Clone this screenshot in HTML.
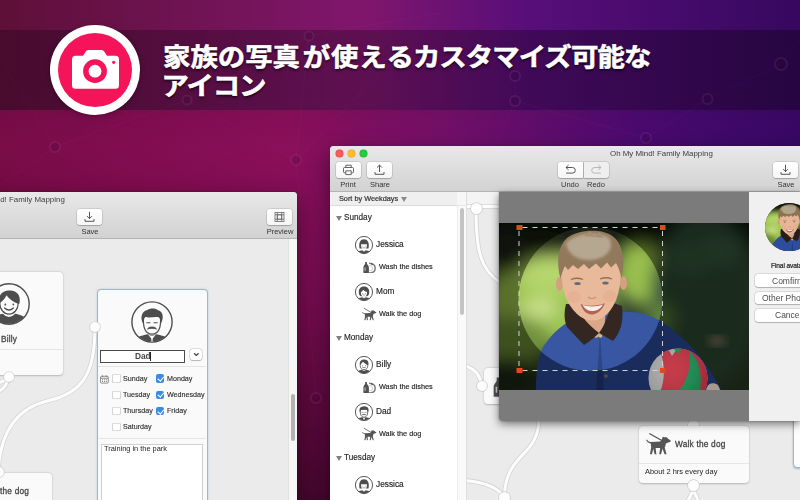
<!DOCTYPE html>
<html lang="ja">
<head>
<meta charset="utf-8">
<title>Oh My Mind! Family Mapping</title>
<style>
*{box-sizing:border-box;margin:0;padding:0}
html,body{width:800px;height:500px;overflow:hidden}
body{position:relative;font-family:"Liberation Sans","Noto Sans CJK JP",sans-serif;color:#333;background:#5a0d45}
.abs{position:absolute}
#bg{left:0;top:0;width:800px;height:500px;
 background:
  linear-gradient(to bottom, rgba(0,0,0,0) 0px, rgba(0,0,0,0) 120px, rgba(20,0,10,.18) 300px, rgba(20,0,10,.58) 500px),
  linear-gradient(to right,#7c0c4a 0%,#8e0f5c 36%,#76106c 56%,#4c0a74 80%,#380868 100%);}
#bgtop{left:0;top:0;width:800px;height:110px;
 background:linear-gradient(to right,#5e1038 0%,#80166c 45%,#580e7a 66%,#36085e 100%)}
#band{left:0;top:30px;width:800px;height:80px;background:linear-gradient(to right,rgba(20,0,20,.3),rgba(20,0,20,.3) 50%,rgba(14,0,24,.4))}
#fade{left:0;top:110px;width:800px;height:40px;background:linear-gradient(to bottom,rgba(40,0,30,.1),rgba(40,0,30,0))}
#camc{left:50px;top:25px;width:90px;height:90px;border-radius:50%;background:#fff;box-shadow:0 1px 5px rgba(0,0,0,.35)}
#camc i{position:absolute;left:8px;top:8px;width:74px;height:74px;border-radius:50%;background:#f5135a}
#h1{left:163px;top:42.500px;transform:scaleY(.93);transform-origin:0 0;font-size:27.4px;line-height:31.100px;font-weight:700;color:#fff;white-space:nowrap;text-shadow:0 2px 3px rgba(0,0,0,.6),0 1px 1px rgba(0,0,0,.35);-webkit-text-stroke:.6px #fff}
#h1 .g2{letter-spacing:.8px;margin-left:2.800px}
#h1 .g3{letter-spacing:-.94px;margin-left:-1.800px}
#h1 .g4{letter-spacing:-.9px;margin-left:.1px}
#h1 .k2{letter-spacing:-1.100px;margin-left:-1.500px}
.win{background:#ebebeb;box-shadow:0 8px 22px rgba(0,0,0,.45),0 0 1px rgba(0,0,0,.5);overflow:hidden}
.tb{left:0;top:0;width:100%;background:linear-gradient(#e9e9e9,#d2d2d2);border-bottom:1px solid #b4b4b4}
.btn{position:absolute;width:25px;height:16px;border-radius:3px;background:linear-gradient(#fff,#f6f6f6);box-shadow:0 0 0 .5px rgba(0,0,0,.18),0 1px 1px rgba(0,0,0,.18)}
.lbl{will-change:transform;position:absolute;font-size:7.5px;color:#333;white-space:nowrap;transform:translateX(-50%);line-height:9px}
.card{background:#fafafa;border-radius:4px;box-shadow:0 .5px 2px rgba(0,0,0,.22),0 0 0 .5px rgba(0,0,0,.04)}
.node{width:10px;height:10px;border-radius:50%;background:#fdfdfd;box-shadow:0 0 0 .8px #cfcfcf,0 .5px 1px rgba(0,0,0,.15)}
.cb{position:absolute;width:8.500px;height:8.500px;border-radius:2px;background:#fff;box-shadow:inset 0 0 0 .6px #b9b9b9}
.cb.on{background:#3b8be6;box-shadow:none}
.cb.on:after{content:"";position:absolute;left:3px;top:.9px;width:2.500px;height:4.700px;border:solid #fff;border-width:0 1.200px 1.200px 0;transform:rotate(40deg)}
.dl{font-size:7.150px;color:#2a2a2a;-webkit-text-stroke:.12px #2a2a2a}
.tri{position:absolute;width:0;height:0;border:3px solid transparent;border-top:5px solid #808080;border-bottom:0}
.gh{margin-top:.7px;font-size:8.200px;color:#262626;-webkit-text-stroke:.15px #262626}
.pn{font-size:8.300px;color:#222;-webkit-text-stroke:.15px #222;margin-top:-.4px;margin-left:-.3px}
.tk{font-size:7.300px;color:#222;-webkit-text-stroke:.15px #222;margin-top:.3px}
.pbtn{width:68px;height:12.500px;border-radius:3px;background:#fff;box-shadow:0 0 0 .5px rgba(0,0,0,.16),0 .5px 1px rgba(0,0,0,.2)}
.pl{font-size:8.500px;color:#4a4a4a}
.ct{font-size:8.300px;color:#444;-webkit-text-stroke:.28px #444;letter-spacing:.2px}
.t{position:absolute;white-space:nowrap;line-height:10px;will-change:transform}
</style>
</head>
<body>
<svg width="0" height="0" style="position:absolute">
<defs>
 <clipPath id="cpa"><circle cx="21" cy="21" r="19.800"/></clipPath>
 <symbol id="av-billy" viewBox="0 0 42 42">
  <circle cx="21" cy="21" r="20.200" fill="#fbfbfb" stroke="#4d4d4d" stroke-width="1.400"/>
  <g clip-path="url(#cpa)">
   <path d="M1 43 C1 34 9 32 15.500 30.500 Q21 35.500 26.500 30.500 C33 32 41 34 41 43z" fill="#4d4d4d"/>
   <path d="M15 30 Q21 36.500 27 30" fill="none" stroke="#fbfbfb" stroke-width="1.300"/>
   <ellipse cx="21" cy="20.500" rx="9.200" ry="10.600" fill="#fbfbfb" stroke="#4d4d4d" stroke-width="1.200"/>
   <path d="M11.300 20 C9.500 11 16 6.800 22.500 7.500 C29.500 7.800 33.500 13.500 31.200 21 C26.500 20 21.500 16.500 18.500 12.300 C17 15.500 14.500 18.500 11.300 20z" fill="#4d4d4d"/>
   <circle cx="17.300" cy="21.500" r=".9" fill="#4d4d4d"/><circle cx="25.300" cy="21.500" r=".9" fill="#4d4d4d"/>
   <path d="M16.500 25 Q21 29 25.500 25" fill="none" stroke="#4d4d4d" stroke-width="1.200" stroke-linecap="round"/>
  </g>
 </symbol>
 <symbol id="av-dad" viewBox="0 0 42 42">
  <circle cx="21" cy="21" r="20.100" fill="#fbfbfb" stroke="#4d4d4d" stroke-width="1.400"/>
  <g clip-path="url(#cpa)">
   <path d="M3 43 C3 36.500 9 35 16.500 33.300 L21 34.500 L25.500 33.300 C33 35 39 36.500 39 43z" fill="#4d4d4d"/>
   <path d="M17.300 33.800 L21 38.500 L24.700 33.800 L21 35z" fill="#fbfbfb"/>
   <path d="M20.300 36.800 L21 36 L21.700 36.800 L21.500 41.500 L20.500 41.500z" fill="#fbfbfb"/>
   <path d="M12.500 17 C12 25 13.500 33.200 21 33.200 C28.500 33.200 30 25 29.500 17 C27 13 15 13 12.500 17z" fill="#fbfbfb" stroke="#4d4d4d" stroke-width="1.200"/>
   <path d="M12 22.500 C8.500 16 11.500 9.500 16.500 9 C19 6.800 25 7 27 9.300 C31.500 10 33.500 16 30 22.500 C29.800 19.500 29 17.500 27.800 16.300 C24 15 18 17.500 14.500 15.800 C13 17.500 12.200 19.500 12 22.500z" fill="#4d4d4d"/>
   <path d="M15.800 21.800h3.200M23 21.800h3.200" stroke="#4d4d4d" stroke-width="1.100" stroke-linecap="round"/>
   <path d="M16.500 28 Q17.500 25.800 21 26 Q24.500 25.800 25.500 28 Q23 27.200 21 27.300 Q19 27.200 16.500 28z" fill="#4d4d4d" stroke="#4d4d4d" stroke-width=".9" stroke-linejoin="round"/>
  </g>
 </symbol>
 <symbol id="av-girl" viewBox="0 0 42 42">
  <circle cx="21" cy="21" r="20" fill="#fff" stroke="#4d4d4d" stroke-width="2.200"/>
  <g clip-path="url(#cpa)">
   <path d="M4 43 C4 35 11 33 21 33 C31 33 38 35 38 43z" fill="#4d4d4d"/>
   <path d="M16 32 L21 37 L26 32z" fill="#fff"/>
   <path d="M10.500 29 C8 14 13 7.500 21 7.500 C29 7.500 34 14 31.500 29z" fill="#4d4d4d"/>
   <path d="M14 19.500 C14 27 16 31.500 21 31.500 C26 31.500 28 27 28 19.500 C24 19.500 18 19.500 14 19.500z" fill="#fff"/>
   <circle cx="18" cy="23.500" r="1" fill="#4d4d4d"/><circle cx="24" cy="23.500" r="1" fill="#4d4d4d"/>
   <path d="M18.500 27.300 Q21 29.300 23.500 27.300" fill="none" stroke="#4d4d4d" stroke-width="1.200" stroke-linecap="round"/>
  </g>
 </symbol>
 <symbol id="av-mom" viewBox="0 0 42 42">
  <circle cx="21" cy="21" r="20" fill="#fff" stroke="#4d4d4d" stroke-width="2.200"/>
  <g clip-path="url(#cpa)">
   <path d="M4 43 C4 35.500 11 33.500 21 33.500 C31 33.500 38 35.500 38 43z" fill="#4d4d4d"/>
   <path d="M16.500 33 Q21 38 25.500 33z" fill="#fff"/>
   <path d="M9.500 26 C6.500 14 13 8 21 8 C29 8 35.500 14 32.500 26 C31 30 28 31 27 31 L15 31 C14 31 11 30 9.500 26z" fill="#4d4d4d"/>
   <path d="M13.800 21 C13.800 28 16 32 21 32 C26 32 28.200 28 28.200 21 C25 20 21 18 19 15.500 C18 18 16 20 13.800 21z" fill="#fff"/>
   <circle cx="18" cy="24" r="1" fill="#4d4d4d"/><circle cx="24" cy="24" r="1" fill="#4d4d4d"/>
   <path d="M18.500 27.800 Q21 29.800 23.500 27.800" fill="none" stroke="#4d4d4d" stroke-width="1.200" stroke-linecap="round"/>
  </g>
 </symbol>
 <symbol id="av-boy" viewBox="0 0 42 42">
  <circle cx="21" cy="21" r="20" fill="#fff" stroke="#4d4d4d" stroke-width="2.200"/>
  <g clip-path="url(#cpa)">
   <path d="M3 43 C3 35 10 33.500 16 32 Q21 36.500 26 32 C32 33.500 39 35 39 43z" fill="#4d4d4d"/>
   <ellipse cx="21" cy="21.500" rx="8.800" ry="10.200" fill="#fff" stroke="#4d4d4d" stroke-width="1.800"/>
   <path d="M11.500 20.500 C9.500 11.500 16 7.500 22.500 8 C29.500 8.300 33 14 31 21.500 C26.500 20.500 21.500 17 18.500 13 C17 16 14.500 19 11.500 20.500z" fill="#4d4d4d"/>
   <circle cx="17.500" cy="22.500" r="1" fill="#4d4d4d"/><circle cx="25" cy="22.500" r="1" fill="#4d4d4d"/>
   <path d="M17 26 Q21 29.500 25 26" fill="none" stroke="#4d4d4d" stroke-width="1.500" stroke-linecap="round"/>
  </g>
 </symbol>
 <symbol id="av-dad2" viewBox="0 0 42 42">
  <circle cx="21" cy="21" r="20.100" fill="#fff" stroke="#4d4d4d" stroke-width="2.200"/>
  <g clip-path="url(#cpa)">
   <path d="M3 43 C3 36.500 9 35 16.500 33.300 L21 34.500 L25.500 33.300 C33 35 39 36.500 39 43z" fill="#4d4d4d"/>
   <path d="M17.300 33.800 L21 38.500 L24.700 33.800 L21 35z" fill="#fff"/>
   <path d="M20.300 36.800 L21 36 L21.700 36.800 L21.500 41.500 L20.500 41.500z" fill="#fff"/>
   <path d="M12.500 17 C12 25 13.500 33.200 21 33.200 C28.500 33.200 30 25 29.500 17 C27 13 15 13 12.500 17z" fill="#fff" stroke="#4d4d4d" stroke-width="1.800"/>
   <path d="M12 22.500 C8.500 16 11.500 9.500 16.500 9 C19 6.800 25 7 27 9.300 C31.500 10 33.500 16 30 22.500 C29.800 19.500 29 17.500 27.800 16.300 C24 15 18 17.500 14.500 15.800 C13 17.500 12.200 19.500 12 22.500z" fill="#4d4d4d"/>
   <path d="M15.800 21.800h3.200M23 21.800h3.200" stroke="#4d4d4d" stroke-width="1.100" stroke-linecap="round"/>
   <path d="M16.500 28 Q17.500 25.800 21 26 Q24.500 25.800 25.500 28 Q23 27.200 21 27.300 Q19 27.200 16.500 28z" fill="#4d4d4d" stroke="#4d4d4d" stroke-width=".9" stroke-linejoin="round"/>
  </g>
 </symbol>
 <symbol id="ic-wash" viewBox="0 0 13 12.500">
  <path d="M6 2.200 C10 2.200 12.200 4.500 12.200 7.200 C12.200 10 10 12 6 12" fill="none" stroke="#7d7d7d" stroke-width="1.500"/>
  <path d="M6.300 4.600 C8.300 4.600 9.700 5.600 9.700 7.200 C9.700 8.800 8.300 9.800 6.300 9.800" fill="none" stroke="#b5b5b5" stroke-width=".8"/>
  <path d="M8.300 2.300 L9.600 3.900" stroke="#444" stroke-width="1.200"/>
  <path d="M.4 12.300 V6.600 C.4 4.600 1.900 3.900 2.200 2.600 V.9 H3.900 V2.600 C4.200 3.900 5.900 4.600 5.900 6.600 V12.300z" fill="#505050"/>
  <rect x="1.600" y="6.300" width=".9" height="3.600" rx=".4" fill="#fff" fill-opacity=".75"/>
 </symbol>
 <symbol id="ic-dog" viewBox="0 0 26 22">
  <path d="M3.800 .7 L15.800 7.500" stroke="#555" stroke-width="1.300" stroke-linecap="round" fill="none"/>
  <path d="M1 6.600 C1.600 8.300 3 8.900 4.800 8.900 L14.300 8.500 L16 6 L16.800 3.700 L18.300 4.200 L20.600 4.200 L22.400 6.100 L24.700 7.400 L24.500 8.800 L21.600 9.700 L19.900 10.600 L19.200 13.500 L18.700 14.600 L20.500 21.200 L18.600 21.200 L16.500 15.800 L15 21.200 L13.200 21.200 L14.200 15 L9.600 15 L10.400 21.200 L8.600 21.200 L7.300 15.800 L5.900 21.200 L4 21.200 L5.200 14.200 L4.700 10.400 C2.500 10.100 .8 9 .1 7z" fill="#555"/>
 </symbol>
</defs>
</svg>
<div id="bg" class="abs"></div>
<div id="bgtop" class="abs"></div>
<div id="band" class="abs"></div>
<div id="fade" class="abs"></div>

<svg class="abs" style="left:0;top:0" width="800" height="500" viewBox="0 0 800 500">
 <g fill="none" stroke="#ff8ad8" stroke-opacity=".04" stroke-width="1">
  <path d="M0 60 L55 147 L187 100 L296 160 L309 36 L187 100M296 160 L437 13 L515 76 L515 101 L646 138 L707.500 99 L781 64 L800 40M309 36 L437 13M55 147 L0 185M515 101 L495 146M646 138 L640 146M296 160 L316 398"/>
 </g>
 <g fill="#2a0030" fill-opacity=".15" stroke="#ff9ae0" stroke-opacity=".09" stroke-width="2">
  <circle cx="55" cy="147" r="5"/><circle cx="296" cy="160" r="5"/><circle cx="187" cy="100" r="4.500"/><circle cx="309" cy="36" r="4.500"/><circle cx="515" cy="76" r="5"/><circle cx="515" cy="101" r="5"/><circle cx="707.500" cy="99" r="5"/><circle cx="781" cy="64" r="6"/><circle cx="646" cy="138" r="5"/><circle cx="316" cy="398" r="5"/>
 </g>
</svg>
<div id="camc" class="abs"><i></i>
<svg class="abs" style="left:0;top:0" width="90" height="90" viewBox="0 0 90 90">
 <path d="M25.500 30.700 h7.500 l2.800 -4.200 a3 3 0 0 1 2.500 -1.500 h13.400 a3 3 0 0 1 2.500 1.500 l2.800 4.200 h8.500 a3.500 3.500 0 0 1 3.500 3.500 v26 a3.500 3.500 0 0 1 -3.500 3.500 h-40 a3.500 3.500 0 0 1 -3.500 -3.500 v-26 a3.500 3.500 0 0 1 3.500 -3.500z" fill="#fff"/>
 <circle cx="45" cy="46.200" r="11.900" fill="#f5135a"/>
 <circle cx="45" cy="46.200" r="6.400" fill="#fff"/>
 <circle cx="63.700" cy="37.300" r="1.600" fill="#f5135a"/>
</svg>
</div>
<div id="h1" class="abs"><span class="g1">家族の写真</span><span class="g2">が使える</span><span class="g3">カスタマイズ</span><span class="g4">可能な</span><br><span class="k2">アイコン</span></div>

<!-- LEFT WINDOW -->
<div class="abs win" style="left:-20px;top:192px;width:317px;height:320px;border-radius:4px 4px 0 0"></div>
<div class="abs tb" style="left:0;top:192px;width:297px;height:47px;border-radius:0 4px 0 0"></div>
<div class="t" style="right:735px;top:195px;font-size:7.920px;color:#3c3c3c">Oh My Mind! Family Mapping</div>
<div class="btn" style="left:77px;top:209px"></div>
<svg class="abs" style="left:77px;top:209px" width="25" height="16" viewBox="0 0 25 16"><g fill="none" stroke="#555" stroke-width="1" stroke-linecap="round" stroke-linejoin="round"><path d="M12.500 3.200v6.300M10.300 7.400l2.200 2.200 2.200 -2.200M8 10.500v1.800h9v-1.800"/></g></svg>
<div class="lbl" style="left:89.500px;top:227px">Save</div>
<div class="btn" style="left:267px;top:209px"></div>
<svg class="abs" style="left:267px;top:209px" width="25" height="16" viewBox="0 0 25 16"><g fill="none" stroke="#666" stroke-width=".8"><rect x="8" y="3.500" width="9" height="9"/><rect x="10.300" y="5.800" width="4.400" height="4.400"/><path d="M8 5.800h9M8 10.200h9M10.300 3.500v9M14.700 3.500v9"/></g></svg>
<div class="lbl" style="left:279.500px;top:227px">Preview</div>
<!-- left scrollbar -->
<div class="abs" style="left:288px;top:239px;width:9px;height:261px;background:#f6f6f6;border-left:1px solid #e2e2e2"></div>
<div class="abs" style="left:290.500px;top:394px;width:4.500px;height:47px;border-radius:2.500px;background:#b2b2b2"></div>
<!-- left canvas connectors -->
<svg class="abs" style="left:0;top:239px" width="288" height="261" viewBox="0 239 288 261">
 <g fill="none" stroke="#d4d4d4" stroke-width="4.600" stroke-linecap="round">
  <path d="M95 327 C95 372 84 393 47 401 C14 409 0 436 -2 472"/>
  <path d="M8.500 377 C6 392 -6 394 -14 392"/>
  <path d="M8.500 377 C2 384 -6 384 -14 381"/>
 </g>
 <g fill="none" stroke="#fdfdfd" stroke-width="3" stroke-linecap="round">
  <path d="M95 327 C95 372 84 393 47 401 C14 409 0 436 -2 472"/>
  <path d="M8.500 377 C6 392 -6 394 -14 392"/>
  <path d="M8.500 377 C2 384 -6 384 -14 381"/>
 </g>
</svg>
<!-- Billy card -->
<div class="abs card" style="left:-40px;top:272px;width:103px;height:103px"></div>
<div class="abs" style="left:-40px;top:349px;width:103px;height:1px;background:#e6e6e6"></div>
<div class="t ct" style="left:1px;top:333.800px">Billy</div>
<svg class="abs" style="left:-12px;top:283px" width="42" height="42"><use href="#av-billy"/></svg>
<!-- the dog card -->
<div class="abs card" style="left:-40px;top:473px;width:92px;height:60px"></div>
<div class="t ct" style="left:0px;top:486px">the dog</div>
<!-- Dad card -->
<div class="abs card" style="left:96.500px;top:288.500px;width:111px;height:230px;border:1.500px solid #8fbbe3;box-shadow:0 0 2px rgba(100,160,220,.5)"></div>
<div class="abs" style="left:98px;top:365.500px;width:108px;height:1px;background:#e4e4e4"></div>
<div class="abs" style="left:98px;top:438px;width:108px;height:1px;background:#e4e4e4"></div>
<div class="abs" style="left:100px;top:350px;width:85px;height:12.500px;background:#fff;border:1px solid #4a4a4a"></div>
<div class="t" style="left:134.500px;top:351.200px;font-size:8.300px;font-weight:700;color:#444">Dad</div>
<div class="abs" style="left:150.300px;top:351.500px;width:1px;height:9.500px;background:#222"></div>
<div class="abs" style="left:189.500px;top:349px;width:12.500px;height:11px;border-radius:2.500px;background:#fff;box-shadow:0 0 0 .5px rgba(0,0,0,.2),0 .5px 1px rgba(0,0,0,.2)"></div>
<svg class="abs" style="left:189.500px;top:349px" width="12.500" height="11" viewBox="0 0 12.500 11"><path d="M4.300 4.500l2 2 2 -2" fill="none" stroke="#444" stroke-width="1.100" stroke-linecap="round" stroke-linejoin="round"/></svg>
<svg class="abs" style="left:131px;top:300.500px" width="42" height="42"><use href="#av-dad"/></svg>
<!-- calendar icon -->
<svg class="abs" style="left:100px;top:374.500px" width="9" height="9" viewBox="0 0 10 10"><g fill="none" stroke="#666" stroke-width=".8"><rect x=".6" y="1.400" width="8.600" height="7.600" rx="1"/><path d="M.6 3.600h8.600M2.800 .4v1.800M7 .4v1.800"/></g><g fill="#666"><rect x="2.300" y="4.800" width="1" height="1"/><rect x="4.400" y="4.800" width="1" height="1"/><rect x="6.500" y="4.800" width="1" height="1"/><rect x="2.300" y="6.700" width="1" height="1"/><rect x="4.400" y="6.700" width="1" height="1"/><rect x="6.500" y="6.700" width="1" height="1"/></g></svg>
<!-- checkboxes -->
<div class="cb" style="left:112px;top:374.300px"></div><div class="t dl" style="left:123.400px;top:373.600px">Sunday</div>
<div class="cb" style="left:112px;top:390.600px"></div><div class="t dl" style="left:123.400px;top:390px">Tuesday</div>
<div class="cb" style="left:112px;top:406.800px"></div><div class="t dl" style="left:123.400px;top:406px">Thursday</div>
<div class="cb" style="left:112px;top:422.800px"></div><div class="t dl" style="left:123.400px;top:422px">Saturday</div>
<div class="cb on" style="left:155.600px;top:374.300px"></div><div class="t dl" style="left:167px;top:373.600px">Monday</div>
<div class="cb on" style="left:155.600px;top:390.600px"></div><div class="t dl" style="left:167px;top:390px">Wednesday</div>
<div class="cb on" style="left:155.600px;top:406.800px"></div><div class="t dl" style="left:167px;top:406px">Friday</div>
<!-- textarea -->
<div class="abs" style="left:100.500px;top:443.500px;width:102.500px;height:70px;background:#fff;border:1px solid #cfcfcf"></div>
<div class="t" style="left:104px;top:443.500px;font-size:7.400px;color:#222">Training in the park</div>

<!-- nodes -->
<div class="abs node" style="left:3.500px;top:372px"></div>
<div class="abs node" style="left:90px;top:322px"></div>
<div class="abs node" style="left:-6px;top:467px"></div>

<!-- RIGHT WINDOW -->
<div class="abs win" style="left:330px;top:146px;width:490px;height:370px;border-radius:4px 4px 0 0"></div>
<div class="abs tb" style="left:330px;top:146px;width:470px;height:46px;border-radius:4px 0 0 0"></div>
<div class="abs" style="left:335.500px;top:149.500px;width:7px;height:7px;border-radius:50%;background:#fc5b57;box-shadow:0 0 0 .5px #de4038"></div>
<div class="abs" style="left:347.800px;top:149.500px;width:7px;height:7px;border-radius:50%;background:#fdbc2e;box-shadow:0 0 0 .5px #dfa023"></div>
<div class="abs" style="left:360.200px;top:149.500px;width:7px;height:7px;border-radius:50%;background:#29c940;box-shadow:0 0 0 .5px #1dad2b"></div>
<div class="t" style="left:610px;top:149px;font-size:7.920px;color:#3c3c3c">Oh My Mind! Family Mapping</div>
<div class="btn" style="left:336px;top:162px"></div>
<svg class="abs" style="left:336px;top:162px" width="25" height="16" viewBox="0 0 25 16"><g fill="none" stroke="#555" stroke-width=".9" stroke-linejoin="round"><path d="M9.800 5.500v-2.300h5.400v2.300M9.800 10.800h-1.300a1 1 0 0 1 -1 -1v-3.300a1 1 0 0 1 1 -1h8a1 1 0 0 1 1 1v3.300a1 1 0 0 1 -1 1h-1.300"/><rect x="9.800" y="8.800" width="5.400" height="3.800"/></g></svg>
<div class="lbl" style="left:347.900px;top:180px">Print</div>
<div class="btn" style="left:367px;top:162px"></div>
<svg class="abs" style="left:367px;top:162px" width="25" height="16" viewBox="0 0 25 16"><g fill="none" stroke="#555" stroke-width="1" stroke-linecap="round" stroke-linejoin="round"><path d="M12.500 9.600v-6.400M10.300 5.300l2.200 -2.200 2.200 2.200M8 10.500v1.800h9v-1.800"/></g></svg>
<div class="lbl" style="left:379.500px;top:180px">Share</div>
<div class="btn" style="left:557.500px;top:162px;border-radius:3px 0 0 3px"></div>
<svg class="abs" style="left:557.500px;top:162px" width="25" height="16" viewBox="0 0 25 16"><g fill="none" stroke="#555" stroke-width="1" stroke-linecap="round" stroke-linejoin="round"><path d="M10.300 3.300l-2.300 2.200 2.300 2.200M8.200 5.500h6.300a2.800 2.800 0 0 1 0 5.600h-6"/></g></svg>
<div class="lbl" style="left:570px;top:180px">Undo</div>
<div class="btn" style="left:583.500px;top:162px;border-radius:0 3px 3px 0;background:#efefef"></div>
<svg class="abs" style="left:583.500px;top:162px" width="25" height="16" viewBox="0 0 25 16"><g fill="none" stroke="#b5b5b5" stroke-width="1" stroke-linecap="round" stroke-linejoin="round"><path d="M14.700 3.300l2.300 2.200 -2.300 2.200M16.800 5.500h-6.300a2.800 2.800 0 0 0 0 5.600h6"/></g></svg>
<div class="lbl" style="left:596px;top:180px">Redo</div>
<div class="btn" style="left:773px;top:162px"></div>
<svg class="abs" style="left:773px;top:162px" width="25" height="16" viewBox="0 0 25 16"><g fill="none" stroke="#555" stroke-width="1" stroke-linecap="round" stroke-linejoin="round"><path d="M12.500 3.200v6.300M10.300 7.400l2.200 2.200 2.200 -2.200M8 10.500v1.800h9v-1.800"/></g></svg>
<div class="lbl" style="left:785.500px;top:180px">Save</div>

<!-- right canvas -->
<div class="abs" style="left:467px;top:192px;width:333px;height:14px;background:#f4f4f4"></div>
<svg class="abs" style="left:467px;top:192px" width="333" height="308" viewBox="467 192 333 308">
 <g fill="none" stroke="#d3d3d3" stroke-width="4.600" stroke-linecap="round">
  <path d="M467 206.500H500"/>
  <path d="M476 208 C476 250 480 270 501 283"/>
  <path d="M465 365.500 C475 369 481 376 481.600 386"/>
  <path d="M539 418 C539 458 505 452 504.500 497"/>
  <path d="M465 480.500 C485 482 498 488 504.500 497"/>
  <path d="M693.300 420V427M693.300 485V490L687.500 502M693.300 490L699 502"/>
 </g>
 <g fill="none" stroke="#fdfdfd" stroke-width="3" stroke-linecap="round">
  <path d="M467 206.500H500"/>
  <path d="M476 208 C476 250 480 270 501 283"/>
  <path d="M465 365.500 C475 369 481 376 481.600 386"/>
  <path d="M539 418 C539 458 505 452 504.500 497"/>
  <path d="M465 480.500 C485 482 498 488 504.500 497"/>
  <path d="M693.300 420V427M693.300 485V490L687.500 502M693.300 490L699 502"/>
 </g>
</svg>
<div class="abs node" style="left:470.500px;top:202.700px;width:11px;height:11px"></div>
<div class="abs card" style="left:484px;top:368px;width:60px;height:36px"></div>
<svg class="abs" style="left:492.500px;top:376px" width="22" height="21.150"><use href="#ic-wash"/></svg>
<div class="abs node" style="left:476.600px;top:381px"></div>
<div class="abs node" style="left:499px;top:491.500px;width:11px;height:11px"></div>
<div class="abs node" style="left:688px;top:419.500px;width:11px;height:11px"></div>
<!-- walk the dog card -->
<div class="abs card" style="left:638.500px;top:425.500px;width:110px;height:57.500px"></div>
<div class="abs" style="left:638.500px;top:462.500px;width:110px;height:1px;background:#e6e6e6"></div>
<svg class="abs" style="left:645.500px;top:432.500px" width="26" height="22"><use href="#ic-dog"/></svg>
<div class="t ct" style="left:675px;top:439.200px">Walk the dog</div>
<div class="t" style="left:645.300px;top:467px;font-size:7.450px;color:#222">About 2 hrs every day</div>
<div class="abs node" style="left:687.800px;top:479.500px;width:11px;height:11px"></div>
<!-- right edge card -->
<div class="abs card" style="left:792.500px;top:400px;width:30px;height:68px;border:1.500px solid #8fbbe3;background:#fdfdfd"></div>
<!-- sheet -->
<div class="abs" style="left:499px;top:192px;width:301px;height:229px;border-radius:0 0 0 3px;box-shadow:0 3px 9px rgba(0,0,0,.5),0 0 2px rgba(0,0,0,.35);background:#f0f0f0"></div>
<div class="abs" style="left:499px;top:192px;width:250px;height:229px;border-radius:0 0 0 3px;background:#7b7b7b"></div>
<svg class="abs" style="left:499px;top:223px" width="250" height="167" viewBox="499 223 250 167">
 <defs>
  <filter id="b8" x="-20%" y="-20%" width="140%" height="140%"><feGaussianBlur stdDeviation="8"/></filter>
  <filter id="b4" x="-20%" y="-20%" width="140%" height="140%"><feGaussianBlur stdDeviation="4"/></filter>
  <filter id="b2" x="-20%" y="-20%" width="140%" height="140%"><feGaussianBlur stdDeviation="1.600"/></filter>
  <filter id="b1" x="-20%" y="-20%" width="140%" height="140%"><feGaussianBlur stdDeviation=".7"/></filter>
  <clipPath id="pc"><rect x="499" y="223" width="250" height="167"/></clipPath>
  <radialGradient id="ballg" cx=".4" cy=".35" r=".8"><stop offset="0" stop-color="#fff" stop-opacity=".1"/><stop offset="1" stop-color="#000" stop-opacity=".25"/></radialGradient>
 </defs>
 <g clip-path="url(#pc)">
  <g id="scene">
  <rect x="499" y="223" width="250" height="167" fill="#2b3d25"/>
  <g filter="url(#b8)">
   <rect x="480" y="205" width="290" height="46" fill="#10160c"/>
   <ellipse cx="540" cy="245" rx="30" ry="14" fill="#161e10"/>
   <ellipse cx="550" cy="300" rx="64" ry="44" fill="#9ac248"/>
   <ellipse cx="556" cy="274" rx="40" ry="18" fill="#b2d465"/>
   <ellipse cx="540" cy="308" rx="18" ry="12" fill="#c2dc80"/>
   <ellipse cx="642" cy="274" rx="26" ry="30" fill="#94bc44"/>
   <ellipse cx="515" cy="340" rx="36" ry="24" fill="#6b8c34"/>
   <ellipse cx="508" cy="380" rx="34" ry="22" fill="#1c2814"/>
   <ellipse cx="508" cy="250" rx="20" ry="22" fill="#1a2414"/>
   <ellipse cx="705" cy="300" rx="55" ry="85" fill="#2e4b35"/>
   <ellipse cx="722" cy="250" rx="20" ry="12" fill="#3a5c40"/>
   <ellipse cx="690" cy="258" rx="22" ry="14" fill="#35583a"/>
   <ellipse cx="735" cy="300" rx="14" ry="30" fill="#2f4c34"/>
   <ellipse cx="660" cy="318" rx="12" ry="14" fill="#5f8636"/>
  </g>
  <ellipse cx="717" cy="341" rx="9" ry="5" fill="#8a755c" filter="url(#b4)"/>
  <!-- jacket -->
  <g filter="url(#b1)">
  <path d="M536 392 C536 372 538 352 546 343 C552 334 560 327 568 322 L620 312 C634 311 650 314 662 322 C686 338 708 362 722 392z" fill="#2d4d9d"/>
  <path d="M600 335 L604 392 L596 392z" fill="#223c82"/>
  <circle cx="600.500" cy="336" r="1.800" fill="#c9c05a"/>
  <circle cx="606" cy="376" r="1.800" fill="#8d8a6a"/>
  <!-- neck -->
  <path d="M578 305 L606 305 L604 334 L596 338 L584 330z" fill="#d9a381"/>
  <!-- collar -->
  <path d="M566 304 C564 312 564 320 567 327 L584 345 C590 341 595 337 599 333 C590 326 580 316 575 304z" fill="#2a1b18"/>
  <path d="M611 302 C609 314 605 325 599 333 L613 341 C620 333 624 322 622 306z" fill="#2a1b18"/>
  </g>
  <!-- face -->
  <g filter="url(#b1)">
  <ellipse cx="559.500" cy="284" rx="3.500" ry="7" fill="#d59a7c"/>
  <ellipse cx="623.500" cy="283" rx="3.500" ry="7" fill="#d59a7c"/>
  <path d="M562 262 C560 285 565 303 577 314 C585 322 597 323 606 315 C617 305 622 287 621 262 C610 250 575 250 562 262z" fill="#e8b696"/>
  <ellipse cx="574" cy="297" rx="7" ry="6" fill="#e3a384" opacity=".45"/>
  <ellipse cx="610" cy="296" rx="7" ry="6" fill="#e3a384" opacity=".45"/>
  <!-- hair -->
  <path d="M560.500 279 C556 262 558 246 567 238 C576 230 600 228 611 235 C622 242 626 258 621.500 278 C620 272 618.500 267 616 263 L611 267.500 L607 262.500 L601 268.500 L596 263.500 L589 269 L584 264 L578 269 L573 265 L568 270 L565 266 C563 270 561.500 274 560.500 279z" fill="#8d7253"/>
  <path d="M566 243 C576 233 598 231 609 238 C614 246 609 256 597 259 C584 262 568 258 566 243z" fill="#b5a68f" opacity=".95" filter="url(#b2)"/>
  <path d="M584 236 L590 231 L594 236 L600 232 L603 238z" fill="#a08a6c"/>
  <!-- brows & eyes -->
  <path d="M571 279.500 Q577 277 583 279.500M600 279 Q606 276.500 612 279" stroke="#8a6a50" stroke-width="1.300" fill="none"/>
  <ellipse cx="577.500" cy="283.500" rx="3.200" ry="1.500" fill="#5b6470"/>
  <ellipse cx="605.500" cy="283" rx="3.200" ry="1.500" fill="#5b6470"/>
  <!-- nose -->
  <path d="M588 297 Q592 300 596 297" stroke="#c98a6c" stroke-width="1.200" fill="none"/>
  <!-- mouth -->
  <path d="M580.500 304 C586 306.500 598 306.500 605 303 C602 312 595 314.500 591.500 314.500 C587 314.500 583 311 580.500 304z" fill="#b25a4e"/>
  <path d="M582.500 305 C587 307 598 307 603 304.500 C600 309.500 596 311 592 311 C588 311 585 309 582.500 305z" fill="#f6efe9"/>
  </g>
  </g>
  <!-- dim outside circle -->
  <path d="M499 223H749V390H499z M662.500 299 A72 72 0 1 0 518.500 299 A72 72 0 1 0 662.500 299z" fill="#000" fill-opacity=".42" fill-rule="evenodd"/>
  <circle cx="590.500" cy="299" r="72" fill="#fff" fill-opacity=".05"/>
  <!-- ball (drawn over the dim layer) -->
  <g filter="url(#b1)">
  <circle cx="678" cy="378" r="29.500" fill="#a6a6a6"/>
  <clipPath id="bc"><circle cx="678" cy="378" r="29.500"/></clipPath>
  <g clip-path="url(#bc)">
   <path d="M661 354 L667 347 L672 356 L679 346 C690 346 700 352 706 362 L712 392 L660 392 C665 380 665 366 661 354z" fill="#bf2536"/>
   <path d="M689 351 C698 358 703 372 700 392 L678 392 C688 380 692 364 689 351z" fill="#0d8a4a"/>
   <path d="M673 348 L678 354 L683 346z" fill="#0d8a4a"/>
   <circle cx="678" cy="378" r="29.500" fill="url(#ballg)"/>
  </g>
  <path d="M706 392 C706 384 712 381 718 385 L721 392z" fill="#a8988e"/>
  </g>
 </g>
 <!-- crop frame -->
 <path d="M522.500 227.500H660M522.500 370.500H660" stroke="#d2d2d2" stroke-width="1" stroke-dasharray="5 5" fill="none"/>
 <path d="M519 231V368M662.500 231V368" stroke="#d2d2d2" stroke-width="1" stroke-dasharray="5 5" fill="none"/>
 <g fill="#e3481f"><rect x="516.500" y="225" width="6" height="5"/><rect x="660" y="225" width="5.500" height="5"/><rect x="516.500" y="368" width="6" height="5"/><rect x="660" y="368" width="5.500" height="5"/></g>
</svg>

<!-- right panel -->
<div class="abs" style="left:749px;top:192px;width:51px;height:229px;background:#f0f0f0"></div>
<svg class="abs" style="left:764.600px;top:202.600px" width="48.400" height="48.400" viewBox="518.500 227 144 144">
 <defs><clipPath id="avc"><circle cx="590.500" cy="299" r="72"/></clipPath></defs>
 <g clip-path="url(#avc)"><use href="#scene"/></g>
</svg>
<div class="t" style="left:771.400px;top:260.600px;font-size:6.600px;color:#222;-webkit-text-stroke:.2px #222;letter-spacing:-.1px">Final avatar</div>
<div class="abs pbtn" style="left:754.600px;top:274.200px"></div><div class="t pl" style="left:772.400px;top:275.500px">Comfirm</div>
<div class="abs pbtn" style="left:754.600px;top:291.600px"></div><div class="t pl" style="left:761.800px;top:292.900px">Other Photo</div>
<div class="abs pbtn" style="left:754.600px;top:309px"></div><div class="t pl" style="left:775.300px;top:310.300px">Cancel</div>

<!-- sidebar -->
<div class="abs" style="left:330px;top:192px;width:136px;height:308px;background:#fff"></div>
<div class="abs" style="left:330px;top:192px;width:127px;height:13.500px;background:#efefef;border-bottom:1px solid #dcdcdc"></div>
<div class="abs" style="left:457px;top:192px;width:9px;height:13.500px;background:#f7f7f7;border-bottom:1px solid #e6e6e6"></div>
<div class="abs" style="left:457px;top:205.500px;width:9px;height:295px;background:#fafafa;border-left:1px solid #ececec"></div>
<div class="abs" style="left:466px;top:192px;width:1px;height:308px;background:#dedede"></div>
<div class="abs" style="left:459.500px;top:208px;width:4.500px;height:107px;border-radius:2.500px;background:#c3c3c3"></div>
<div class="t sb" style="left:338.500px;top:193.500px;font-size:7.300px;color:#333;-webkit-text-stroke:.2px #333">Sort by Weekdays</div>
<div class="tri" style="left:401px;top:197px;border-top-color:#8a8a8a"></div>
<!-- sidebar rows -->
<div class="tri" style="left:335.500px;top:216px"></div><div class="t gh" style="left:344px;top:212.5px">Sunday</div>
<svg class="abs" style="left:354.500px;top:235.5px" width="18" height="18"><use href="#av-girl"/></svg><div class="t pn" style="left:376px;top:239.3px">Jessica</div>
<svg class="abs" style="left:363px;top:260.5px" width="13" height="12.500"><use href="#ic-wash"/></svg><div class="t tk" style="left:379px;top:262px">Wash the dishes</div>
<svg class="abs" style="left:354.500px;top:283px" width="18" height="18"><use href="#av-mom"/></svg><div class="t pn" style="left:376px;top:286.8px">Mom</div>
<svg class="abs" style="left:361.500px;top:308.2px" width="15" height="12.700"><use href="#ic-dog"/></svg><div class="t tk" style="left:379px;top:309px">Walk the dog</div>
<div class="tri" style="left:335.500px;top:336px"></div><div class="t gh" style="left:344px;top:332.5px">Monday</div>
<svg class="abs" style="left:354.500px;top:355.5px" width="18" height="18"><use href="#av-boy"/></svg><div class="t pn" style="left:376px;top:359.3px">Billy</div>
<svg class="abs" style="left:363px;top:380.5px" width="13" height="12.500"><use href="#ic-wash"/></svg><div class="t tk" style="left:379px;top:382px">Wash the dishes</div>
<svg class="abs" style="left:354.500px;top:402.5px" width="18" height="18"><use href="#av-dad2"/></svg><div class="t pn" style="left:376px;top:406.3px">Dad</div>
<svg class="abs" style="left:361.500px;top:428.2px" width="15" height="12.700"><use href="#ic-dog"/></svg><div class="t tk" style="left:379px;top:429px">Walk the dog</div>
<div class="tri" style="left:335.500px;top:456px"></div><div class="t gh" style="left:344px;top:452.5px">Tuesday</div>
<svg class="abs" style="left:354.500px;top:475.5px" width="18" height="18"><use href="#av-girl"/></svg><div class="t pn" style="left:376px;top:479.3px">Jessica</div>
</body>
</html>
